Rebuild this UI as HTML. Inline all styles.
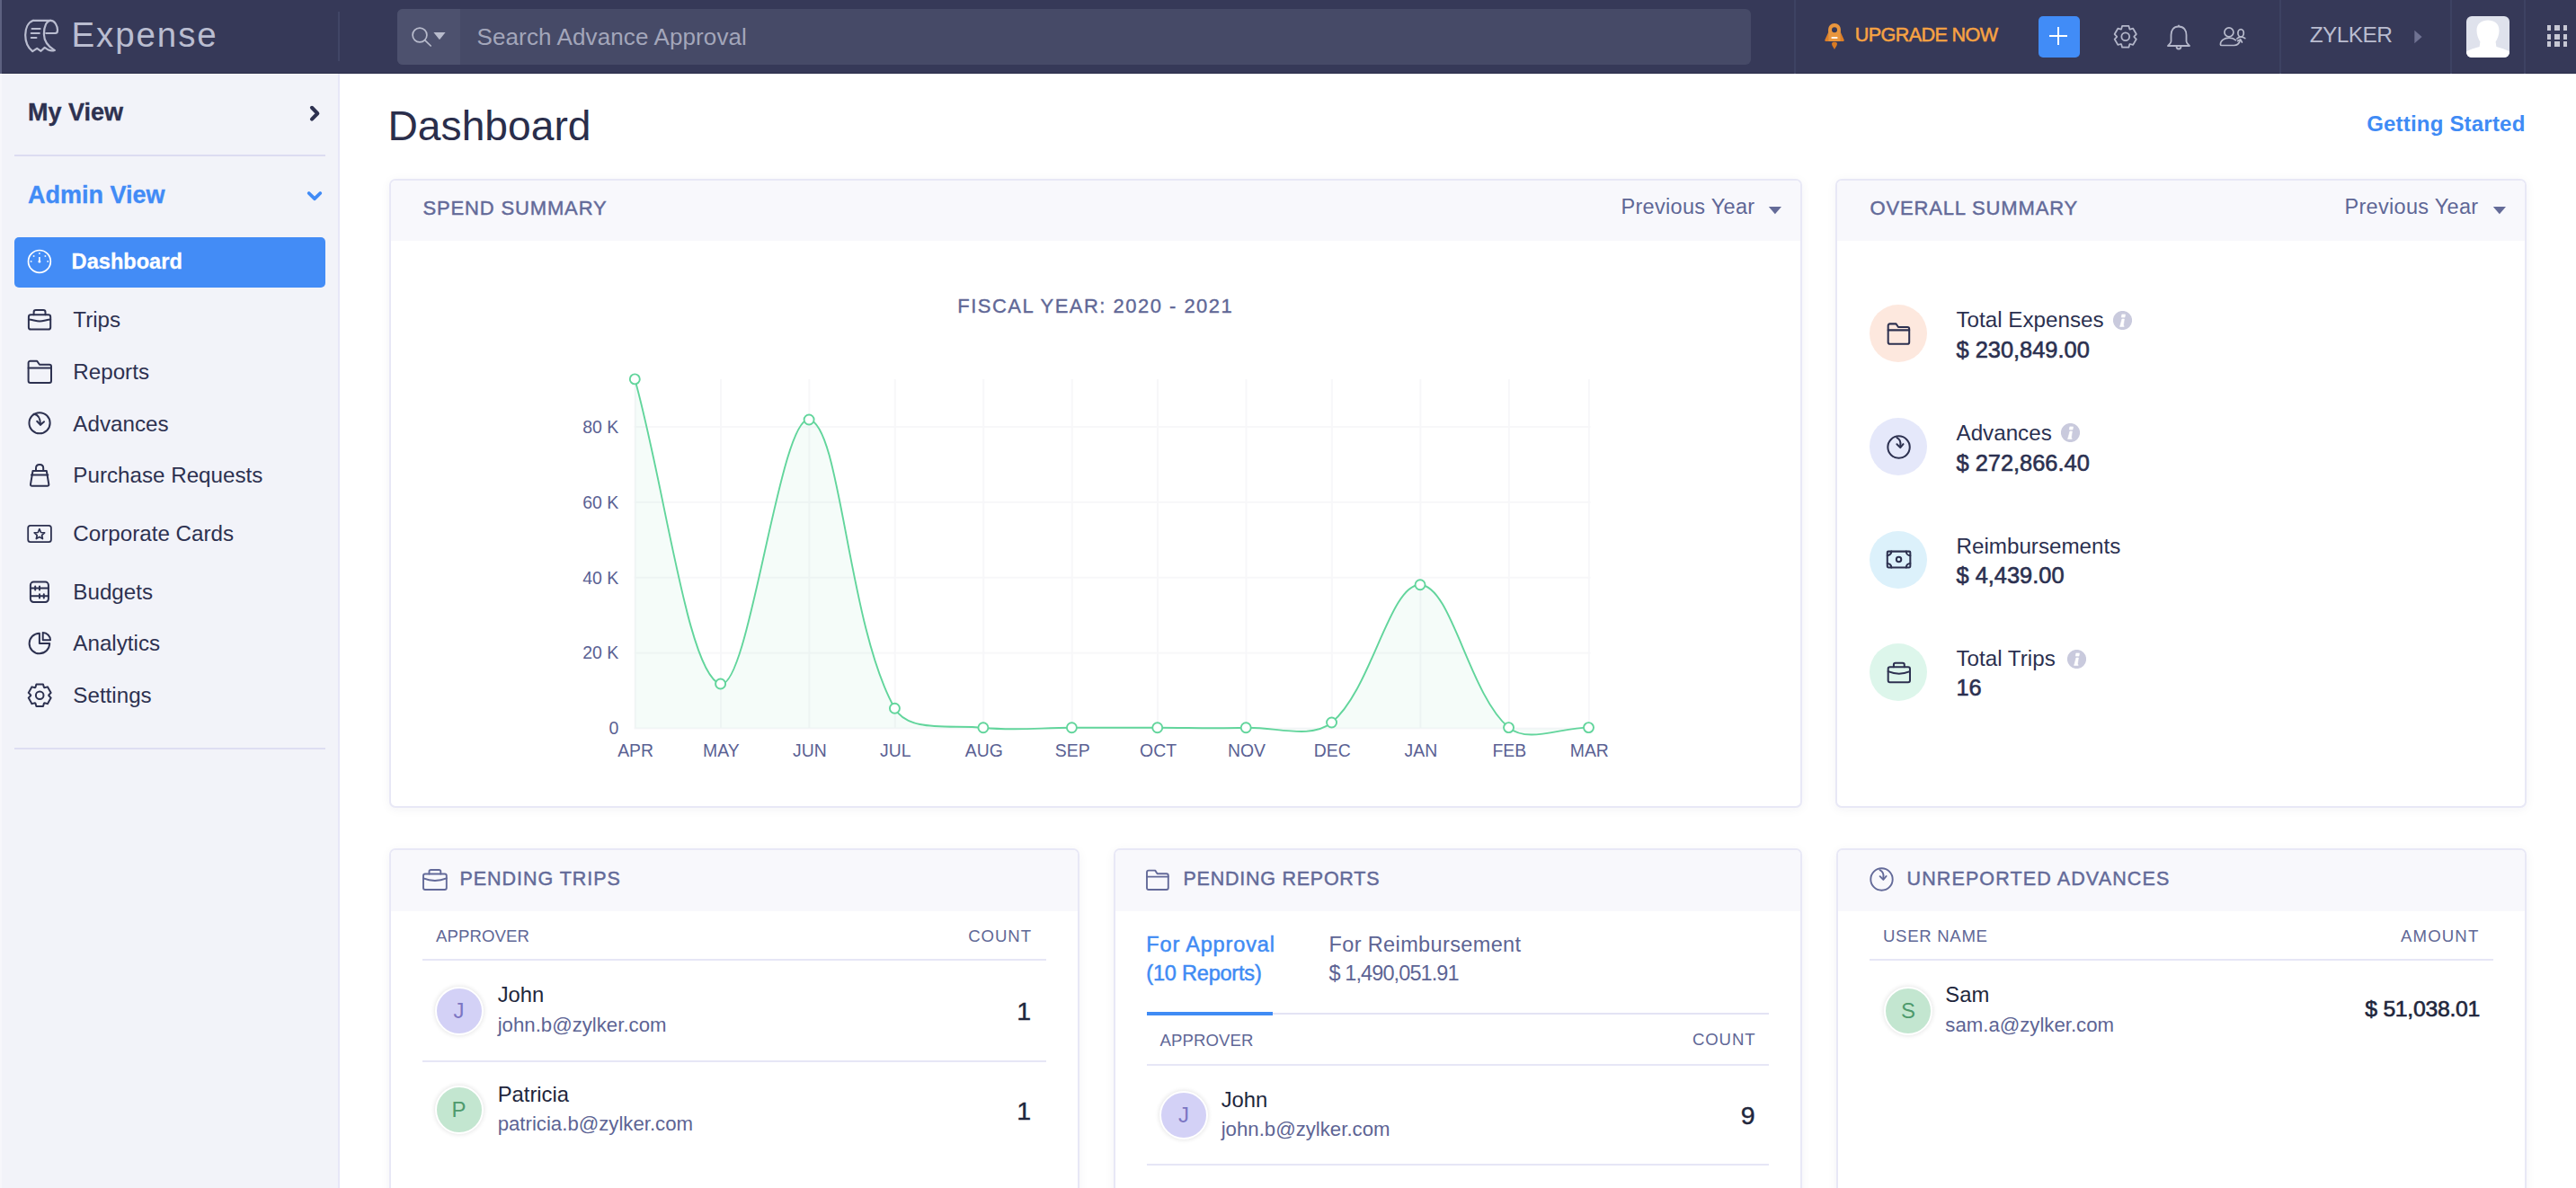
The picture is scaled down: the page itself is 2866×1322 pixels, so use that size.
<!DOCTYPE html>
<html><head><meta charset="utf-8"><title>Expense Dashboard</title>
<style>
html,body{margin:0;padding:0;width:2866px;height:1322px;overflow:hidden;background:#fff;}
body{position:relative;font-family:"Liberation Sans", sans-serif;}
.r{position:absolute;display:block;}
.t{position:absolute;white-space:nowrap;line-height:1;}
</style></head><body>
<div class="r" style="left:0px;top:0px;width:2866px;height:82px;background:#363958;"></div>
<div class="r" style="left:0px;top:81px;width:2866px;height:1px;background:#292c49;"></div>
<div class="r" style="left:0px;top:0px;width:2px;height:82px;background:#5d6180;"></div>
<svg class="r" style="left:0px;top:0px;" width="80" height="82" viewBox="0 0 80 82"><g fill="none" stroke="#babdd0" stroke-width="2.2" stroke-linecap="round" stroke-linejoin="round"><path d="M37,22.8 H56.5"/><path d="M37,22.8 C31,25 28.2,32 28.2,39 C28.2,47 31,53 36.2,57.2 L41.2,53.9 L45.5,56.8 L49.7,52.9 L53.9,55.6 C56,56.5 58,57 60.6,55.9"/><path d="M60.6,55.9 C54,52 49,46 48.9,38 C48.9,29 52,22.8 56.5,22.8 C61,22.8 64,29 64,33.5 C64,36 63,37 61.5,37 L51.3,37"/><path d="M35.6,32 H44.6 M34.8,37 H43.8 M34.8,42 H40.4"/></g></svg>
<div class="t" style="font-size:38.5px;color:#babdd0;font-weight:400;top:20.00px;letter-spacing:1.9px;left:79.5px;">Expense</div>
<div class="r" style="left:376px;top:13px;width:2px;height:55px;background:#414666;"></div>
<div class="r" style="left:442px;top:10px;width:1506px;height:62px;background:#464a67;border-radius:6px;"></div>
<div class="r" style="left:442px;top:10px;width:70px;height:62px;background:#4d516e;border-radius:6px 0 0 6px;"></div>
<svg class="r" style="left:450px;top:25px;" width="52" height="34" viewBox="0 0 52 34"><g fill="none" stroke="#b8bbcc" stroke-width="1.7"><circle cx="17" cy="14" r="7.9"/><path d="M22.6,19.6 L29.2,26" stroke-linecap="round"/></g><path d="M32.4,11 L45.6,11 L39.6,18.6 Q39,19.5 38.4,18.6 Z" fill="#b8bbcc"/></svg>
<div class="t" style="font-size:26px;color:#a3a6ba;font-weight:400;top:28.49px;letter-spacing:0.12px;left:530.5px;">Search Advance Approval</div>
<div class="r" style="left:1996px;top:0px;width:2px;height:82px;background:#3d4262;"></div>
<svg class="r" style="left:2026px;top:24px;" width="30" height="34" viewBox="0 0 30 34"><path d="M8.1,12 L4.3,20.6 C4,21.4 4.4,21.9 5.2,21.9 L8.1,21.9 Z M21.9,12 L25.7,20.6 C26,21.4 25.6,21.9 24.8,21.9 L21.9,21.9 Z" fill="#df7f26"/><path d="M8.1,21.9 V9.3 C8.1,5 11,2 15,2 C19,2 21.9,5 21.9,9.3 V21.9 Z" fill="#e9963d"/><circle cx="15" cy="9.3" r="3" fill="#363958"/><path d="M12.3,18 H17.7" stroke="#fff3e6" stroke-width="1.8" stroke-linecap="round"/><path d="M12,24.8 C12,23.4 13.3,22.8 15,22.8 C16.7,22.8 18,23.4 18,24.8 C18,26.6 16.2,28.8 15,31 C13.8,28.8 12,26.6 12,24.8 Z" fill="#d97a22"/></svg>
<div class="t" style="font-size:21.6px;color:#f6a243;font-weight:400;top:27.91px;letter-spacing:-0.62px;-webkit-text-stroke:0.55px #f6a243;left:2063.8px;">UPGRADE NOW</div>
<div class="r" style="left:2268px;top:18px;width:46px;height:46px;background:#418cf7;border-radius:5px;"></div>
<div class="r" style="left:2280.4px;top:38.9px;width:19.6px;height:2.4px;background:#fff;"></div>
<div class="r" style="left:2289px;top:30.2px;width:2.4px;height:19.6px;background:#fff;"></div>
<svg class="r" style="left:2350px;top:26px;" width="30" height="30" viewBox="0 0 30 30"><g fill="none" stroke="#b3b6c9" stroke-width="1.8" stroke-linejoin="round"><path d="M10.15,6.38 L11.09,2.95 L18.41,2.95 L19.35,6.38 L19.74,6.60 L23.18,5.70 L26.84,12.05 L24.35,14.57 L24.35,15.03 L26.84,17.55 L23.18,23.90 L19.74,23.00 L19.35,23.22 L18.41,26.65 L11.09,26.65 L10.15,23.22 L9.76,23.00 L6.32,23.90 L2.66,17.55 L5.15,15.03 L5.15,14.57 L2.66,12.05 L6.32,5.70 L9.76,6.60 Z"/><circle cx="14.75" cy="14.8" r="4.4"/></g></svg>
<svg class="r" style="left:2408px;top:26px;" width="32" height="32" viewBox="0 0 32 32"><g fill="none" stroke="#b3b6c9" stroke-width="1.8" stroke-linejoin="round"><path d="M16,3.5 C10,3.5 7.5,8 7.5,13 L7.5,20 C7.5,22 5.5,23.5 4,25 L28,25 C26.5,23.5 24.5,22 24.5,20 L24.5,13 C24.5,8 22,3.5 16,3.5 Z"/><path d="M13.5,25.5 C13.5,27.5 14.8,28.5 16,28.5 C17.2,28.5 18.5,27.5 18.5,25.5"/><path d="M16,1.8 V3.5"/></g></svg>
<svg class="r" style="left:2467px;top:28px;" width="34" height="26" viewBox="0 0 34 26"><g fill="none" stroke="#b8bbcc" stroke-width="1.7" stroke-linecap="round" stroke-linejoin="round"><circle cx="12.9" cy="7.9" r="5"/><path d="M20.3,16.6 C18.5,15 16,14.2 13,14.2 C8,14.2 3.4,16.8 3.4,21.4 C3.4,22.2 4,22.5 5,22.5 L18.5,22.5 C21.5,22.5 24.5,20 25.6,16.2"/><path d="M22.6,17.6 L25.7,15.9 L27.4,19"/><ellipse cx="26.1" cy="8.8" rx="3.2" ry="4.2"/><path d="M21.9,15 C23,13.6 24.6,13.1 26.2,13.1 C28,13.1 29.6,13.6 30.8,14.6"/></g></svg>
<div class="r" style="left:2536px;top:0px;width:2px;height:82px;background:#3d4262;"></div>
<div class="t" style="font-size:24.5px;color:#babdd0;font-weight:400;top:27.26px;letter-spacing:-0.6px;left:2569.7px;">ZYLKER</div>
<svg class="r" style="left:2684px;top:32px;" width="14" height="18" viewBox="0 0 14 18"><path d="M2.3,1.8 L10.6,9 L2.3,16.2 Z" fill="#6f7292"/></svg>
<div class="r" style="left:2726px;top:0px;width:2px;height:82px;background:#3d4262;"></div>
<div class="r" style="left:2744px;top:18px;width:48px;height:46px;background:#dfe2ec;border-radius:6px;overflow:hidden;"></div>
<svg class="r" style="left:2744px;top:18px;border-radius:6px;" width="48" height="46" viewBox="0 0 48 46"><g fill="#fff"><path d="M24,4.5 C30.5,4.5 36.6,8 36.5,16 C36.4,21 34.6,25.5 32.6,28.5 L33.4,34 C39,35.6 45,37.5 48,39.5 L48,46 L0,46 L0,39.5 C3,37.5 9,35.6 14.6,34 L15.4,28.5 C13.4,25.5 11.6,21 11.5,16 C11.4,8 17.5,4.5 24,4.5 Z"/></g></svg>
<div class="r" style="left:2808px;top:0px;width:2px;height:82px;background:#3d4262;"></div>
<div class="r" style="left:2834px;top:28px;width:4.2px;height:5.8px;background:#c7c8d4;"></div>
<div class="r" style="left:2842px;top:28px;width:5.8px;height:5.8px;background:#c7c8d4;"></div>
<div class="r" style="left:2851.8px;top:28px;width:4.2px;height:5.8px;background:#c7c8d4;"></div>
<div class="r" style="left:2834px;top:38px;width:4.2px;height:5.8px;background:#c7c8d4;"></div>
<div class="r" style="left:2842px;top:38px;width:5.8px;height:5.8px;background:#c7c8d4;"></div>
<div class="r" style="left:2851.8px;top:38px;width:4.2px;height:5.8px;background:#c7c8d4;"></div>
<div class="r" style="left:2834px;top:46.2px;width:4.2px;height:5.8px;background:#c7c8d4;"></div>
<div class="r" style="left:2842px;top:46.2px;width:5.8px;height:5.8px;background:#c7c8d4;"></div>
<div class="r" style="left:2851.8px;top:46.2px;width:4.2px;height:5.8px;background:#c7c8d4;"></div>
<div class="r" style="left:0px;top:83px;width:376px;height:1239px;background:#f2f3f9;"></div>
<div class="r" style="left:376px;top:82px;width:2px;height:1240px;background:#e7e7f7;"></div>
<div class="r" style="left:0px;top:83px;width:2px;height:1239px;background:#f7f7fb;"></div>
<div class="t" style="font-size:27px;color:#2d3150;font-weight:700;top:112.34px;-webkit-text-stroke:0.35px #2d3150;left:31px;">My View</div>
<svg class="r" style="left:340px;top:114px;" width="22" height="24" viewBox="0 0 22 24"><path d="M7,5.8 L13.3,12.2 L7,18.6" fill="none" stroke="#2d3150" stroke-width="4.1" stroke-linecap="round" stroke-linejoin="round"/></svg>
<div class="r" style="left:16px;top:171.5px;width:346px;height:2px;background:#dcdcf1;"></div>
<div class="t" style="font-size:27px;color:#418bf6;font-weight:700;top:203.94px;-webkit-text-stroke:0.35px #418bf6;left:31px;">Admin View</div>
<svg class="r" style="left:338px;top:206.8px;" width="24" height="22" viewBox="0 0 24 22"><path d="M5.7,8 L12,14.2 L18.3,8" fill="none" stroke="#418bf6" stroke-width="3.8" stroke-linecap="round" stroke-linejoin="round"/></svg>
<div class="r" style="left:16px;top:264px;width:346px;height:56px;background:#438cf6;border-radius:5px;"></div>
<svg class="r" style="left:28px;top:275px;" width="32" height="32" viewBox="0 0 32 32"><circle cx="15.9" cy="15.9" r="12.4" fill="none" stroke="#fff" stroke-width="1.7"/><g fill="#fff"><rect x="15.1" y="6.2" width="1.6" height="1.6"/><rect x="8.8" y="9.2" width="1.6" height="1.6"/><rect x="21.6" y="9.2" width="1.6" height="1.6"/><rect x="5.8" y="15.1" width="1.6" height="1.6"/><rect x="24.4" y="15.1" width="1.6" height="1.6"/><rect x="15.1" y="11" width="1.6" height="5"/><circle cx="15.9" cy="16.1" r="1.5"/></g></svg>
<div class="t" style="font-size:23.6px;color:#ffffff;font-weight:700;top:280.32px;-webkit-text-stroke:0.3px #ffffff;left:79.6px;">Dashboard</div>
<div class="t" style="font-size:24.2px;color:#2d3150;font-weight:400;top:344.31px;left:81.3px;">Trips</div>
<div class="t" style="font-size:24.2px;color:#2d3150;font-weight:400;top:402.31px;left:81.3px;">Reports</div>
<div class="t" style="font-size:24.2px;color:#2d3150;font-weight:400;top:460.31px;left:81.3px;">Advances</div>
<div class="t" style="font-size:24.2px;color:#2d3150;font-weight:400;top:516.51px;left:81.3px;">Purchase Requests</div>
<div class="t" style="font-size:24.2px;color:#2d3150;font-weight:400;top:582.31px;left:81.3px;">Corporate Cards</div>
<div class="t" style="font-size:24.2px;color:#2d3150;font-weight:400;top:646.51px;left:81.3px;">Budgets</div>
<div class="t" style="font-size:24.2px;color:#2d3150;font-weight:400;top:703.91px;left:81.3px;">Analytics</div>
<div class="t" style="font-size:24.2px;color:#2d3150;font-weight:400;top:762.31px;left:81.3px;">Settings</div>
<svg class="r" style="left:28px;top:340px;" width="32" height="32" viewBox="0 0 32 32"><g fill="none" stroke="#2d3150" stroke-width="2" stroke-linecap="round" stroke-linejoin="round" stroke-width="1.8"><rect x="3.9" y="10.3" width="24.3" height="16.3" rx="2.4"/><path d="M9.6,10.3 V7.4 C9.6,5.9 10.5,5.1 12,5.1 H20.1 C21.6,5.1 22.5,5.9 22.5,7.4 V10.3"/><path d="M3.9,15.4 C8,15.8 12,17.3 16.1,17.6 C20.2,17.3 24.2,15.8 28.2,15.4"/></g></svg>
<svg class="r" style="left:28px;top:398px;" width="32" height="32" viewBox="0 0 32 32"><g fill="none" stroke="#2d3150" stroke-width="2" stroke-linecap="round" stroke-linejoin="round"><path d="M3.6,6 C3.6,4.6 4.3,3.8 5.8,3.8 H13.2 L16,7.8 H27 C28.3,7.8 29,8.6 29,9.8 V25.8 C29,27.2 28.3,28 27,28 H5.8 C4.3,28 3.6,27.2 3.6,25.8 Z"/><path d="M3.6,11.5 H29"/></g></svg>
<svg class="r" style="left:28px;top:455px;" width="32" height="32" viewBox="0 0 32 32"><g fill="none" stroke="#2d3150" stroke-width="2" stroke-linecap="round" stroke-linejoin="round"><circle cx="16.05" cy="15.75" r="11.6"/><path d="M9.6,5.8 C14,6.2 16.9,10 17,17.6"/><path d="M13.2,13.8 L17,17.8 L21,14.2"/></g></svg>
<svg class="r" style="left:28px;top:512px;" width="32" height="32" viewBox="0 0 32 32"><g fill="none" stroke="#2d3150" stroke-width="2" stroke-linecap="round" stroke-linejoin="round"><path d="M8.5,12 H23.8 L26.3,26.8 C26.5,28 25.8,28.7 24.6,28.7 H7.7 C6.5,28.7 5.8,28 6,26.8 Z"/><path d="M12,12 V9 C12,6.5 13.8,4.9 16.1,4.9 C18.4,4.9 20.2,6.5 20.2,9 V12"/><path d="M7,16.5 H25.3"/></g></svg>
<svg class="r" style="left:28px;top:578px;" width="32" height="32" viewBox="0 0 32 32"><g fill="none" stroke="#2d3150" stroke-width="2" stroke-linecap="round" stroke-linejoin="round"><rect x="3.2" y="6.8" width="25.7" height="18.3" rx="2.6" stroke-width="1.8"/><path d="M15.90,10.70 L17.52,14.48 L21.61,14.85 L18.52,17.55 L19.43,21.55 L15.90,19.45 L12.37,21.55 L13.28,17.55 L10.19,14.85 L14.28,14.48 Z" stroke-width="1.7"/></g></svg>
<svg class="r" style="left:28px;top:642px;" width="32" height="32" viewBox="0 0 32 32"><g fill="none" stroke="#2d3150" stroke-width="2" stroke-linecap="round" stroke-linejoin="round" stroke-width="1.8"><rect x="5.9" y="5.6" width="20" height="22.4" rx="3.4"/><path d="M5.9,12.5 H25.9 M5.9,21.3 H25.9"/><path d="M11.2,10.4 V14.6 M16,10.4 V14.6 M16,19.2 V23.4 M20.8,19.2 V23.4"/></g></svg>
<svg class="r" style="left:28px;top:699px;" width="32" height="32" viewBox="0 0 32 32"><g fill="none" stroke="#2d3150" stroke-width="2" stroke-linecap="round" stroke-linejoin="round" stroke-width="1.8"><path d="M15.9,5.7 A11.3,11.3 0 1 0 27.2,17.1 L15.9,17.1 Z"/><path d="M19.7,5.1 L19.7,13.3 L28,13.3 A8.3,8.3 0 0 0 19.7,5.1 Z"/></g></svg>
<svg class="r" style="left:28px;top:758px;" width="32" height="32" viewBox="0 0 32 32"><g fill="none" stroke="#2d3150" stroke-width="2" stroke-linejoin="round"><path d="M11.41,6.97 L12.42,3.52 L19.98,3.52 L20.99,6.97 L21.40,7.21 L24.90,6.36 L28.68,12.91 L26.20,15.51 L26.20,15.99 L28.68,18.59 L24.90,25.14 L21.40,24.29 L20.99,24.53 L19.98,27.98 L12.42,27.98 L11.41,24.53 L11.00,24.29 L7.50,25.14 L3.72,18.59 L6.20,15.99 L6.20,15.51 L3.72,12.91 L7.50,6.36 L11.00,7.21 Z"/><circle cx="16.2" cy="15.75" r="4.3"/></g></svg>
<div class="r" style="left:16px;top:832px;width:346px;height:2px;background:#dedef2;"></div>
<div class="r" style="left:378px;top:82px;width:2488px;height:1240px;background:#ffffff;"></div>
<div class="r" style="left:378px;top:82px;width:2488px;height:1px;background:#ffffff;"></div>
<div class="t" style="font-size:46.2px;color:#2a2e4b;font-weight:400;top:117.28px;left:431.5px;">Dashboard</div>
<div class="t" style="font-size:24px;color:#3f8bf5;font-weight:700;top:125.88px;letter-spacing:0.2px;right:56.69999999999982px;margin-right:-0.2px;">Getting Started</div>
<div class="r" style="left:432.5px;top:198.5px;width:1572.5px;height:700.0px;box-sizing:border-box;border:2px solid #e8e8f6;border-radius:7px;background:#fff;overflow:hidden;box-shadow:0 2px 12px rgba(40,40,80,0.05);"><div style="position:absolute;left:0;top:0;right:0;height:67.10000000000002px;background:#f8f8fc;"></div></div>
<div class="t" style="font-size:22px;color:#636a99;font-weight:400;top:221.37px;letter-spacing:0.85px;-webkit-text-stroke:0.45px #636a99;left:470.5px;">SPEND SUMMARY</div>
<div class="t" style="font-size:23.5px;color:#5f6796;font-weight:400;top:219.10px;letter-spacing:0.3px;left:1803.5px;">Previous Year</div>
<svg class="r" style="left:1964px;top:226px;" width="22" height="16" viewBox="0 0 22 16"><path d="M3.8,4 L18,4 L10.9,12.2 Z" fill="#646b98"/></svg>
<div class="r" style="left:2042px;top:198.5px;width:769px;height:700.0px;box-sizing:border-box;border:2px solid #e8e8f6;border-radius:7px;background:#fff;overflow:hidden;box-shadow:0 2px 12px rgba(40,40,80,0.05);"><div style="position:absolute;left:0;top:0;right:0;height:67.10000000000002px;background:#f8f8fc;"></div></div>
<div class="t" style="font-size:22px;color:#636a99;font-weight:400;top:221.37px;letter-spacing:0.85px;-webkit-text-stroke:0.45px #636a99;left:2080.5px;">OVERALL SUMMARY</div>
<div class="t" style="font-size:23.5px;color:#5f6796;font-weight:400;top:219.10px;letter-spacing:0.3px;left:2608.5px;">Previous Year</div>
<svg class="r" style="left:2770px;top:226px;" width="22" height="16" viewBox="0 0 22 16"><path d="M3.8,4 L18,4 L10.9,12.2 Z" fill="#646b98"/></svg>
<div class="t" style="font-size:22px;color:#5f6796;font-weight:400;top:329.57px;letter-spacing:1.48px;-webkit-text-stroke:0.35px #5f6796;left:1218.75px;transform:translateX(-50%);">FISCAL YEAR: 2020 - 2021</div>
<svg class="r" style="left:0px;top:0px;overflow:visible;" width="2010" height="900" viewBox="0 0 2010 900"><rect x="705.5" y="473.90" width="1064.0" height="2" fill="#f7f7f9"/><rect x="705.5" y="557.80" width="1064.0" height="2" fill="#f7f7f9"/><rect x="705.5" y="641.70" width="1064.0" height="2" fill="#f7f7f9"/><rect x="705.5" y="725.60" width="1064.0" height="2" fill="#f7f7f9"/><rect x="705.5" y="809.50" width="1064.0" height="2" fill="#f7f7f9"/><rect x="705.60" y="422" width="2" height="388.5" fill="#f7f7f9"/><rect x="800.92" y="422" width="2" height="388.5" fill="#f7f7f9"/><rect x="899.41" y="422" width="2" height="388.5" fill="#f7f7f9"/><rect x="994.73" y="422" width="2" height="388.5" fill="#f7f7f9"/><rect x="1093.22" y="422" width="2" height="388.5" fill="#f7f7f9"/><rect x="1191.72" y="422" width="2" height="388.5" fill="#f7f7f9"/><rect x="1287.04" y="422" width="2" height="388.5" fill="#f7f7f9"/><rect x="1385.53" y="422" width="2" height="388.5" fill="#f7f7f9"/><rect x="1480.85" y="422" width="2" height="388.5" fill="#f7f7f9"/><rect x="1579.34" y="422" width="2" height="388.5" fill="#f7f7f9"/><rect x="1677.84" y="422" width="2" height="388.5" fill="#f7f7f9"/><rect x="1766.80" y="422" width="2" height="388.5" fill="#f7f7f9"/><path d="M706.30,421.90 C739.66,540.59 765.54,752.60 801.62,761.00 C833.37,768.39 867.51,462.42 900.11,467.00 C935.34,471.94 943.29,695.98 995.43,788.20 C1011.12,815.96 1059.05,805.98 1093.92,809.80 C1127.99,813.54 1157.95,809.80 1192.42,809.80 C1225.78,809.80 1254.37,809.80 1287.74,809.80 C1322.21,809.80 1351.79,810.83 1386.23,809.80 C1419.62,808.80 1458.22,823.15 1481.55,804.00 C1526.06,767.46 1546.01,649.73 1580.04,650.70 C1614.96,651.69 1634.08,771.92 1678.54,809.60 C1699.69,827.53 1736.36,809.60 1767.50,809.60 L1767.50,810.5 L706.30,810.5 Z" fill="#4cd18a" fill-opacity="0.055"/><path d="M706.30,421.90 C739.66,540.59 765.54,752.60 801.62,761.00 C833.37,768.39 867.51,462.42 900.11,467.00 C935.34,471.94 943.29,695.98 995.43,788.20 C1011.12,815.96 1059.05,805.98 1093.92,809.80 C1127.99,813.54 1157.95,809.80 1192.42,809.80 C1225.78,809.80 1254.37,809.80 1287.74,809.80 C1322.21,809.80 1351.79,810.83 1386.23,809.80 C1419.62,808.80 1458.22,823.15 1481.55,804.00 C1526.06,767.46 1546.01,649.73 1580.04,650.70 C1614.96,651.69 1634.08,771.92 1678.54,809.60 C1699.69,827.53 1736.36,809.60 1767.50,809.60" fill="none" stroke="#62d59c" stroke-width="1.9"/><circle cx="706.30" cy="421.90" r="5.5" fill="#fff" stroke="#62d59c" stroke-width="1.9"/><circle cx="801.62" cy="761.00" r="5.5" fill="#fff" stroke="#62d59c" stroke-width="1.9"/><circle cx="900.11" cy="467.00" r="5.5" fill="#fff" stroke="#62d59c" stroke-width="1.9"/><circle cx="995.43" cy="788.20" r="5.5" fill="#fff" stroke="#62d59c" stroke-width="1.9"/><circle cx="1093.92" cy="809.80" r="5.5" fill="#fff" stroke="#62d59c" stroke-width="1.9"/><circle cx="1192.42" cy="809.80" r="5.5" fill="#fff" stroke="#62d59c" stroke-width="1.9"/><circle cx="1287.74" cy="809.80" r="5.5" fill="#fff" stroke="#62d59c" stroke-width="1.9"/><circle cx="1386.23" cy="809.80" r="5.5" fill="#fff" stroke="#62d59c" stroke-width="1.9"/><circle cx="1481.55" cy="804.00" r="5.5" fill="#fff" stroke="#62d59c" stroke-width="1.9"/><circle cx="1580.04" cy="650.70" r="5.5" fill="#fff" stroke="#62d59c" stroke-width="1.9"/><circle cx="1678.54" cy="809.60" r="5.5" fill="#fff" stroke="#62d59c" stroke-width="1.9"/><circle cx="1767.50" cy="809.60" r="5.5" fill="#fff" stroke="#62d59c" stroke-width="1.9"/></svg>
<div class="t" style="font-size:19.5px;color:#5a6193;font-weight:400;top:465.79px;right:2177.7px;">80 K</div>
<div class="t" style="font-size:19.5px;color:#5a6193;font-weight:400;top:549.69px;right:2177.7px;">60 K</div>
<div class="t" style="font-size:19.5px;color:#5a6193;font-weight:400;top:633.59px;right:2177.7px;">40 K</div>
<div class="t" style="font-size:19.5px;color:#5a6193;font-weight:400;top:717.49px;right:2177.7px;">20 K</div>
<div class="t" style="font-size:19.5px;color:#5a6193;font-weight:400;top:801.39px;right:2177.7px;">0</div>
<div class="t" style="font-size:19.4px;color:#5a6193;font-weight:400;top:826.37px;left:707.1px;transform:translateX(-50%);">APR</div>
<div class="t" style="font-size:19.4px;color:#5a6193;font-weight:400;top:826.37px;left:802.42px;transform:translateX(-50%);">MAY</div>
<div class="t" style="font-size:19.4px;color:#5a6193;font-weight:400;top:826.37px;left:900.91px;transform:translateX(-50%);">JUN</div>
<div class="t" style="font-size:19.4px;color:#5a6193;font-weight:400;top:826.37px;left:996.23px;transform:translateX(-50%);">JUL</div>
<div class="t" style="font-size:19.4px;color:#5a6193;font-weight:400;top:826.37px;left:1094.72px;transform:translateX(-50%);">AUG</div>
<div class="t" style="font-size:19.4px;color:#5a6193;font-weight:400;top:826.37px;left:1193.22px;transform:translateX(-50%);">SEP</div>
<div class="t" style="font-size:19.4px;color:#5a6193;font-weight:400;top:826.37px;left:1288.54px;transform:translateX(-50%);">OCT</div>
<div class="t" style="font-size:19.4px;color:#5a6193;font-weight:400;top:826.37px;left:1387.03px;transform:translateX(-50%);">NOV</div>
<div class="t" style="font-size:19.4px;color:#5a6193;font-weight:400;top:826.37px;left:1482.35px;transform:translateX(-50%);">DEC</div>
<div class="t" style="font-size:19.4px;color:#5a6193;font-weight:400;top:826.37px;left:1580.84px;transform:translateX(-50%);">JAN</div>
<div class="t" style="font-size:19.4px;color:#5a6193;font-weight:400;top:826.37px;left:1679.34px;transform:translateX(-50%);">FEB</div>
<div class="t" style="font-size:19.4px;color:#5a6193;font-weight:400;top:826.37px;left:1768.3px;transform:translateX(-50%);">MAR</div>
<div class="r" style="left:2080px;top:339px;width:64px;height:64px;border-radius:50%;background:#fde8de;"></div>
<svg class="r" style="left:2096.5px;top:355.5px;" width="31" height="31" viewBox="0 0 31 31"><g transform="translate(0.3,0.3) scale(1.13)"><g fill="none" stroke="#2d3150" stroke-width="1.8" stroke-linecap="round" stroke-linejoin="round"><path d="M3,5.5 C3,4.3 3.6,3.6 4.8,3.6 H10.8 L13,6.8 H22 C23.2,6.8 23.8,7.5 23.8,8.6 V21.6 C23.8,22.8 23.2,23.5 22,23.5 H4.8 C3.6,23.5 3,22.8 3,21.6 Z"/><path d="M3,9.8 H23.8"/></g></g></svg>
<div class="t" style="font-size:24.2px;color:#2b3050;font-weight:400;top:344.11px;left:2176.5px;">Total Expenses</div>
<div class="t" style="font-size:25.4px;color:#2b3050;font-weight:400;top:376.99px;-webkit-text-stroke:0.6px #2b3050;left:2176.5px;">$ 230,849.00</div>
<div class="r" style="left:2080px;top:465px;width:64px;height:64px;border-radius:50%;background:#e5e8fa;"></div>
<svg class="r" style="left:2096.5px;top:481.5px;" width="31" height="31" viewBox="0 0 31 31"><g transform="translate(0.3,0.3) scale(1.13)"><g fill="none" stroke="#2d3150" stroke-width="1.8" stroke-linecap="round" stroke-linejoin="round"><circle cx="13.5" cy="13.5" r="10.8"/><path d="M11.7,4.3 C14.4,5.7 15.6,8.8 15,12"/><path d="M11.6,10.6 L15,14 L17.9,10.5"/></g></g></svg>
<div class="t" style="font-size:24.2px;color:#2b3050;font-weight:400;top:470.41px;left:2176.5px;">Advances</div>
<div class="t" style="font-size:25.4px;color:#2b3050;font-weight:400;top:503.19px;-webkit-text-stroke:0.6px #2b3050;left:2176.5px;">$ 272,866.40</div>
<div class="r" style="left:2080px;top:590.7px;width:64px;height:64px;border-radius:50%;background:#dcf1fb;"></div>
<svg class="r" style="left:2096.5px;top:607.2px;" width="31" height="31" viewBox="0 0 31 31"><g transform="translate(0.3,0.3) scale(1.13)"><g fill="none" stroke="#2d3150" stroke-width="1.8" stroke-linecap="round" stroke-linejoin="round"><rect x="2.2" y="5.6" width="22.6" height="15.8" rx="1"/><path d="M2.2,9.6 C4.4,9.6 6.2,7.8 6.2,5.6 M20.8,5.6 C20.8,7.8 22.6,9.6 24.8,9.6 M2.2,17.4 C4.4,17.4 6.2,19.2 6.2,21.4 M20.8,21.4 C20.8,19.2 22.6,17.4 24.8,17.4"/><circle cx="13.5" cy="13.5" r="2.4"/></g></g></svg>
<div class="t" style="font-size:24.2px;color:#2b3050;font-weight:400;top:596.21px;left:2176.5px;">Reimbursements</div>
<div class="t" style="font-size:25.4px;color:#2b3050;font-weight:400;top:628.49px;-webkit-text-stroke:0.6px #2b3050;left:2176.5px;">$ 4,439.00</div>
<div class="r" style="left:2080px;top:716px;width:64px;height:64px;border-radius:50%;background:#ddf6eb;"></div>
<svg class="r" style="left:2096.5px;top:732.5px;" width="31" height="31" viewBox="0 0 31 31"><g transform="translate(0.3,0.3) scale(1.13)"><g fill="none" stroke="#2d3150" stroke-width="1.8" stroke-linecap="round" stroke-linejoin="round"><rect x="3" y="8" width="21.5" height="15" rx="1.8"/><path d="M8.5,8 V5.6 C8.5,4.5 9.2,4 10.2,4 H17.3 C18.3,4 19,4.5 19,5.6 V8"/><path d="M3,12.2 C6.7,13.6 10,14.4 13.75,14.6 C17.5,14.4 20.8,13.6 24.5,12.2"/></g></g></svg>
<div class="t" style="font-size:24.2px;color:#2b3050;font-weight:400;top:720.51px;left:2176.5px;">Total Trips</div>
<div class="t" style="font-size:25.4px;color:#2b3050;font-weight:400;top:753.19px;-webkit-text-stroke:0.6px #2b3050;left:2176.5px;">16</div>
<svg class="r" style="left:2350.6px;top:345.5px;" width="21" height="21" viewBox="0 0 21 21"><circle cx="10.5" cy="10.5" r="10.6" fill="#c9cadd"/><g fill="#fff" stroke="#fff" stroke-width="0.6" stroke-linejoin="round"><path d="M9.8,3.9 L13.5,3.9 L13.0,7.1 L9.3,7.1 Z"/><path d="M9.9,9 L12.4,9 L11.5,15.6 L12.2,17.4 L7.5,17.4 L8.2,15.4 Z"/></g></svg>
<svg class="r" style="left:2293.2px;top:470.7px;" width="21" height="21" viewBox="0 0 21 21"><circle cx="10.5" cy="10.5" r="10.6" fill="#c9cadd"/><g fill="#fff" stroke="#fff" stroke-width="0.6" stroke-linejoin="round"><path d="M9.8,3.9 L13.5,3.9 L13.0,7.1 L9.3,7.1 Z"/><path d="M9.9,9 L12.4,9 L11.5,15.6 L12.2,17.4 L7.5,17.4 L8.2,15.4 Z"/></g></svg>
<svg class="r" style="left:2299.5px;top:722.7px;" width="21" height="21" viewBox="0 0 21 21"><circle cx="10.5" cy="10.5" r="10.6" fill="#c9cadd"/><g fill="#fff" stroke="#fff" stroke-width="0.6" stroke-linejoin="round"><path d="M9.8,3.9 L13.5,3.9 L13.0,7.1 L9.3,7.1 Z"/><path d="M9.9,9 L12.4,9 L11.5,15.6 L12.2,17.4 L7.5,17.4 L8.2,15.4 Z"/></g></svg>
<div class="r" style="left:433px;top:944.4px;width:768px;height:397.6px;box-sizing:border-box;border:2px solid #e8e8f6;border-radius:7px;background:#fff;overflow:hidden;box-shadow:0 2px 12px rgba(40,40,80,0.05);"><div style="position:absolute;left:0;top:0;right:0;height:67.30000000000007px;background:#f8f8fc;"></div></div>
<div class="r" style="left:1239px;top:944.4px;width:765.5px;height:397.6px;box-sizing:border-box;border:2px solid #e8e8f6;border-radius:7px;background:#fff;overflow:hidden;box-shadow:0 2px 12px rgba(40,40,80,0.05);"><div style="position:absolute;left:0;top:0;right:0;height:67.30000000000007px;background:#f8f8fc;"></div></div>
<div class="r" style="left:2043px;top:944.4px;width:768px;height:397.6px;box-sizing:border-box;border:2px solid #e8e8f6;border-radius:7px;background:#fff;overflow:hidden;box-shadow:0 2px 12px rgba(40,40,80,0.05);"><div style="position:absolute;left:0;top:0;right:0;height:67.30000000000007px;background:#f8f8fc;"></div></div>
<svg class="r" style="left:469px;top:964px;" width="30" height="28" viewBox="0 0 30 28"><g fill="none" stroke="#636a99" stroke-width="1.9" stroke-linecap="round" stroke-linejoin="round"><rect x="2" y="8.5" width="25.8" height="17.5" rx="2"/><path d="M8.5,8.5 V5.8 C8.5,4.6 9.3,4 10.5,4 H19.3 C20.5,4 21.3,4.6 21.3,5.8 V8.5"/><path d="M2,13.3 C6.5,15 10.5,15.8 14.9,16 C19.3,15.8 23.3,15 27.8,13.3"/></g></svg>
<div class="t" style="font-size:21.5px;color:#636a99;font-weight:400;top:967.80px;letter-spacing:0.95px;-webkit-text-stroke:0.45px #636a99;left:511.5px;">PENDING TRIPS</div>
<svg class="r" style="left:1274px;top:964px;" width="30" height="28" viewBox="0 0 30 28"><g fill="none" stroke="#636a99" stroke-width="1.9" stroke-linecap="round" stroke-linejoin="round"><path d="M2,6.8 C2,5.5 2.7,4.6 4,4.6 H11.2 L13.6,8.2 H23.8 C25.1,8.2 25.8,9 25.8,10.2 V24 C25.8,25.3 25.1,26 23.8,26 H4 C2.7,26 2,25.3 2,24 Z"/><path d="M2,11.6 H25.8"/></g></svg>
<div class="t" style="font-size:21.5px;color:#636a99;font-weight:400;top:967.80px;letter-spacing:0.75px;-webkit-text-stroke:0.45px #636a99;left:1316.5px;">PENDING REPORTS</div>
<svg class="r" style="left:2079px;top:964px;" width="30" height="28" viewBox="0 0 30 28"><g fill="none" stroke="#636a99" stroke-width="1.9" stroke-linecap="round" stroke-linejoin="round"><circle cx="14.5" cy="14.5" r="12.2"/><path d="M12.5,4.2 C15.5,5.8 17,9.3 16.3,12.8"/><path d="M12.6,11.2 L16.3,14.9 L19.6,11"/></g></svg>
<div class="t" style="font-size:21.5px;color:#636a99;font-weight:400;top:967.80px;letter-spacing:1.12px;-webkit-text-stroke:0.45px #636a99;left:2121.5px;">UNREPORTED ADVANCES</div>
<div class="t" style="font-size:18.6px;color:#5f6796;font-weight:400;top:1032.85px;letter-spacing:0.1px;left:485px;">APPROVER</div>
<div class="t" style="font-size:19px;color:#5f6796;font-weight:400;top:1032.51px;letter-spacing:0.9px;right:1719px;margin-right:-0.9px;font-size:18.6px;">COUNT</div>
<div class="r" style="left:470px;top:1067.2px;width:694px;height:2px;background:#e6e6f6;"></div>
<div class="r" style="left:483.5px;top:1098px;width:54px;height:54px;border-radius:50%;background:#d3d1f6;box-sizing:border-box;border:2.5px solid #fff;box-shadow:0 0 5px 0.5px rgba(0,0,0,0.11);"></div>
<div class="t" style="font-size:24px;color:#7c76c3;font-weight:400;top:1112.88px;left:510.5px;transform:translateX(-50%);">J</div>
<div class="t" style="font-size:23.8px;color:#21263c;font-weight:400;top:1095.45px;left:553.7px;">John</div>
<div class="t" style="font-size:22.2px;color:#5d6494;font-weight:400;top:1129.60px;left:553.7px;">john.b@zylker.com</div>
<div class="t" style="font-size:28.5px;color:#21263c;font-weight:400;top:1111.47px;-webkit-text-stroke:0.4px #21263c;right:1719px;">1</div>
<div class="r" style="left:470px;top:1179.6px;width:694px;height:2px;background:#e6e6f6;"></div>
<div class="r" style="left:483.5px;top:1207.7px;width:54px;height:54px;border-radius:50%;background:#c3e6d0;box-sizing:border-box;border:2.5px solid #fff;box-shadow:0 0 5px 0.5px rgba(0,0,0,0.11);"></div>
<div class="t" style="font-size:24px;color:#4e9a6c;font-weight:400;top:1222.58px;left:510.5px;transform:translateX(-50%);">P</div>
<div class="t" style="font-size:23.8px;color:#21263c;font-weight:400;top:1205.85px;left:553.7px;">Patricia</div>
<div class="t" style="font-size:22.2px;color:#5d6494;font-weight:400;top:1239.60px;left:553.7px;">patricia.b@zylker.com</div>
<div class="t" style="font-size:28.5px;color:#21263c;font-weight:400;top:1221.77px;-webkit-text-stroke:0.4px #21263c;right:1719px;">1</div>
<div class="t" style="font-size:23.5px;color:#3f8bf4;font-weight:400;top:1039.90px;letter-spacing:0.85px;-webkit-text-stroke:0.5px #3f8bf4;left:1275.3px;">For Approval</div>
<div class="t" style="font-size:23.5px;color:#3f8bf4;font-weight:400;top:1072.10px;letter-spacing:-0.2px;-webkit-text-stroke:0.5px #3f8bf4;left:1275.3px;">(10 Reports)</div>
<div class="t" style="font-size:23.5px;color:#5d6494;font-weight:400;top:1039.90px;letter-spacing:0.37px;left:1478.5px;">For Reimbursement</div>
<div class="t" style="font-size:23.5px;color:#5d6494;font-weight:400;top:1072.10px;letter-spacing:-0.9px;left:1478.5px;">$ 1,490,051.91</div>
<div class="r" style="left:1276px;top:1127px;width:692px;height:2.2px;background:#e3e3f4;"></div>
<div class="r" style="left:1276px;top:1125.8px;width:139.8px;height:4px;background:#3f8bf4;"></div>
<div class="t" style="font-size:18.6px;color:#5f6796;font-weight:400;top:1148.55px;letter-spacing:0.1px;left:1290.4px;">APPROVER</div>
<div class="t" style="font-size:19px;color:#5f6796;font-weight:400;top:1148.21px;letter-spacing:0.9px;right:913.4000000000001px;margin-right:-0.9px;font-size:18.6px;">COUNT</div>
<div class="r" style="left:1276px;top:1183.6px;width:692px;height:2px;background:#e6e6f6;"></div>
<div class="r" style="left:1290px;top:1213.8px;width:54px;height:54px;border-radius:50%;background:#d3d1f6;box-sizing:border-box;border:2.5px solid #fff;box-shadow:0 0 5px 0.5px rgba(0,0,0,0.11);"></div>
<div class="t" style="font-size:24px;color:#7c76c3;font-weight:400;top:1228.68px;left:1317px;transform:translateX(-50%);">J</div>
<div class="t" style="font-size:23.8px;color:#21263c;font-weight:400;top:1211.85px;left:1358.7px;">John</div>
<div class="t" style="font-size:22.2px;color:#5d6494;font-weight:400;top:1245.70px;left:1358.7px;">john.b@zylker.com</div>
<div class="t" style="font-size:28.5px;color:#21263c;font-weight:400;top:1227.47px;-webkit-text-stroke:0.4px #21263c;right:913.4000000000001px;">9</div>
<div class="r" style="left:1276px;top:1295.3px;width:692px;height:2px;background:#e6e6f6;"></div>
<div class="t" style="font-size:18.6px;color:#5f6796;font-weight:400;top:1032.85px;letter-spacing:0.68px;left:2095px;">USER NAME</div>
<div class="t" style="font-size:18.6px;color:#5f6796;font-weight:400;top:1032.85px;letter-spacing:1.14px;right:108.69999999999982px;margin-right:-1.14px;">AMOUNT</div>
<div class="r" style="left:2080px;top:1067.2px;width:694px;height:2px;background:#e6e6f6;"></div>
<div class="r" style="left:2096px;top:1098px;width:54px;height:54px;border-radius:50%;background:#c3e6d0;box-sizing:border-box;border:2.5px solid #fff;box-shadow:0 0 5px 0.5px rgba(0,0,0,0.11);"></div>
<div class="t" style="font-size:24px;color:#4e9a6c;font-weight:400;top:1112.88px;left:2123px;transform:translateX(-50%);">S</div>
<div class="t" style="font-size:23.8px;color:#21263c;font-weight:400;top:1095.45px;left:2164.3px;">Sam</div>
<div class="t" style="font-size:22.2px;color:#5d6494;font-weight:400;top:1129.60px;left:2164.3px;">sam.a@zylker.com</div>
<div class="t" style="font-size:24.8px;color:#21263c;font-weight:400;top:1111.40px;letter-spacing:-0.3px;-webkit-text-stroke:0.6px #21263c;right:107px;margin-right:--0.3px;">$ 51,038.01</div>
</body></html>
